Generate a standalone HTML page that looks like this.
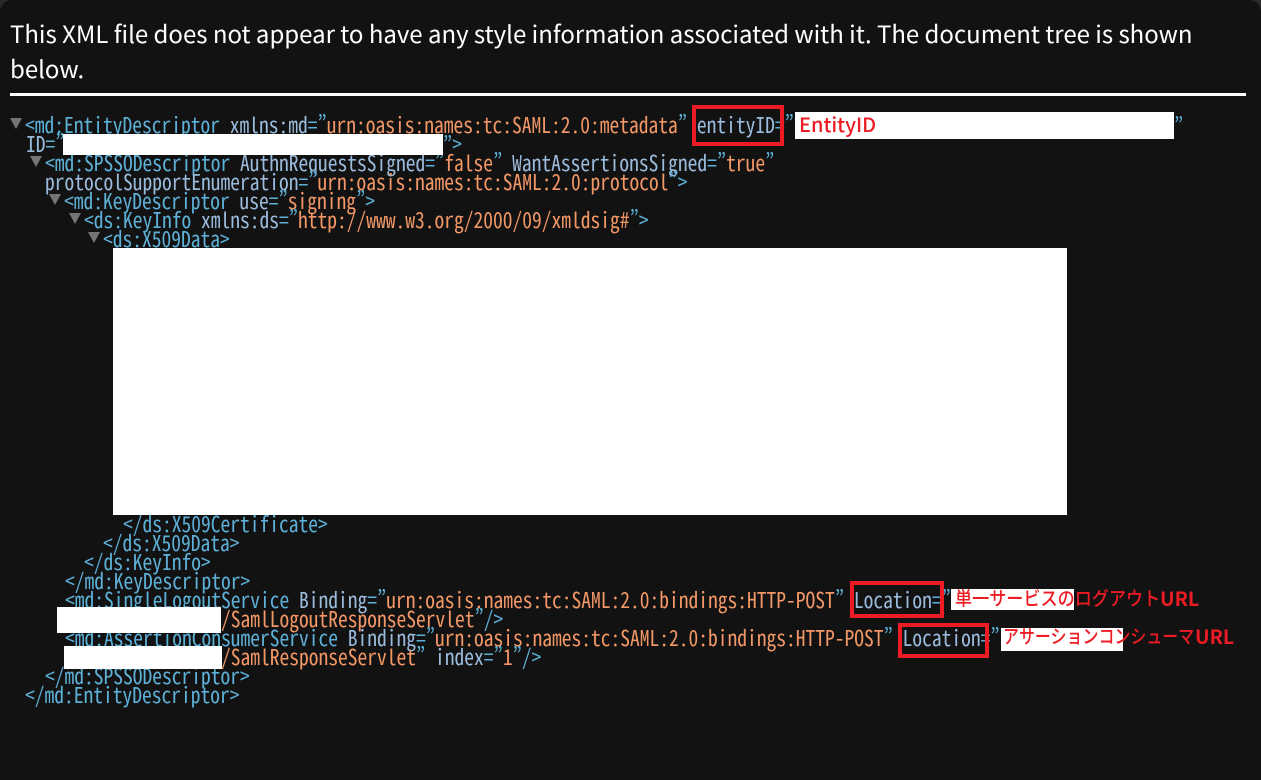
<!DOCTYPE html>
<html lang="ja"><head><meta charset="utf-8"><title>XML</title>
<style>
html,body{margin:0;padding:0;background:#2a2a2a;}
#p{position:relative;width:1261px;height:780px;overflow:hidden;background:#121212;border-radius:12px 12px 0 0;}
.h{position:absolute;left:10px;width:1200px;font:24px/35px "Noto Sans CJK JP","Liberation Sans",sans-serif;color:#fff;white-space:pre;letter-spacing:-.01px;}
.hr{position:absolute;left:10px;top:93px;width:1236px;height:3px;background:#fff;}
.l{position:absolute;white-space:pre;font-family:"Noto Sans Mono CJK JP","Noto Sans CJK JP","Liberation Mono",monospace;font-size:19.5px;line-height:19px;height:19px;color:#5db0d7;letter-spacing:0;transform:translateY(-1px) scaleY(1.12);transform-origin:50% 50%;}
.a{color:#9bbbdc}.v{color:#f29766}
.t{position:absolute;width:0;height:0;border-left:6px solid transparent;border-right:6px solid transparent;border-top:11px solid #757575;}
.w{position:absolute;background:#fff;}
.r{position:absolute;border:4px solid #ed1c24;box-sizing:border-box;}
.x{position:absolute;white-space:pre;color:#ed1c24;font-family:"Noto Sans CJK JP","Liberation Sans",sans-serif;font-weight:500;font-size:20px;line-height:24px;}
.k{transform-origin:0 50%;font-size:19px;}
.u{position:absolute;white-space:pre;color:#ed1c24;font-family:"Noto Sans CJK JP","Liberation Sans",sans-serif;font-weight:700;font-size:19.5px;line-height:24px;}
</style></head><body><div id="p">
<div class="h" style="top:15px">This XML file does not appear to have any style information associated with it. The document tree is shown</div>
<div class="h" style="top:50px">below.</div>
<div class="hr"></div>

<div class="t" style="left:10px;top:118px"></div>
<div class="t" style="left:30px;top:156px"></div>
<div class="t" style="left:49px;top:194px"></div>
<div class="t" style="left:69px;top:213px"></div>
<div class="t" style="left:88px;top:232px"></div>

<div class="l" style="left:25px;top:115px">&lt;md:EntityDescriptor <span class="a">xmlns:md</span>=”<span class="v">urn:oasis:names:tc:SAML:2.0:metadata</span>” <span class="a">entityID</span>=”</div>
<div class="l" style="left:1174px;top:115px">”</div>
<div class="l" style="left:26px;top:134px"><span class="a">ID</span>=”</div>
<div class="l" style="left:443px;top:134px">”&gt;</div>
<div class="l" style="left:45px;top:153px">&lt;md:SPSSODescriptor <span class="a">AuthnRequestsSigned</span>=”<span class="v">false</span>” <span class="a">WantAssertionsSigned</span>=”<span class="v">true</span>”</div>
<div class="l" style="left:45px;top:172px"><span class="a">protocolSupportEnumeration</span>=”<span class="v">urn:oasis:names:tc:SAML:2.0:protocol</span>”&gt;</div>
<div class="l" style="left:64px;top:191px">&lt;md:KeyDescriptor <span class="a">use</span>=”<span class="v">signing</span>”&gt;</div>
<div class="l" style="left:84px;top:210px">&lt;ds:KeyInfo <span class="a">xmlns:ds</span>=”<span class="v">http://www.w3.org/2000/09/xmldsig#</span>”&gt;</div>
<div class="l" style="left:103px;top:229px">&lt;ds:X509Data&gt;</div>
<div class="l" style="left:123px;top:514px">&lt;/ds:X509Certificate&gt;</div>
<div class="l" style="left:103px;top:533px">&lt;/ds:X509Data&gt;</div>
<div class="l" style="left:84px;top:552px">&lt;/ds:KeyInfo&gt;</div>
<div class="l" style="left:65px;top:571px">&lt;/md:KeyDescriptor&gt;</div>
<div class="l" style="left:65px;top:590px">&lt;md:SingleLogoutService <span class="a">Binding</span>=”<span class="v">urn:oasis:names:tc:SAML:2.0:bindings:HTTP-POST</span>” <span class="a">Location</span>=”</div>
<div class="l" style="left:221px;top:609px"><span class="v">/SamlLogoutResponseServlet</span>”/&gt;</div>
<div class="l" style="left:65px;top:628px">&lt;md:AssertionConsumerService <span class="a">Binding</span>=”<span class="v">urn:oasis:names:tc:SAML:2.0:bindings:HTTP-POST</span>” <span class="a">Location</span>=”</div>
<div class="l" style="left:221px;top:647px"><span class="v">/SamlResponseServlet</span>” <span class="a">index</span>=”<span class="v">1</span>”/&gt;</div>
<div class="l" style="left:45px;top:666px">&lt;/md:SPSSODescriptor&gt;</div>
<div class="l" style="left:25px;top:685px">&lt;/md:EntityDescriptor&gt;</div>

<div class="w" style="left:795px;top:112px;width:379px;height:27px"></div>
<div class="w" style="left:63px;top:134px;width:380px;height:21px"></div>
<div class="w" style="left:113px;top:248px;width:954px;height:267px"></div>
<div class="w" style="left:57px;top:607px;width:164px;height:26px"></div>
<div class="w" style="left:64px;top:646px;width:158px;height:23px"></div>
<div class="w" style="left:951px;top:589px;width:123px;height:21px"></div>
<div class="w" style="left:1001px;top:628px;width:122px;height:23px"></div>

<div class="r" style="left:692px;top:105px;width:92px;height:41px"></div>
<div class="r" style="left:850px;top:581px;width:94px;height:37px"></div>
<div class="r" style="left:898px;top:623px;width:91px;height:35px"></div>

<div class="x" style="left:799px;top:112px">EntityID</div>
<div class="x k" style="left:955px;top:586px;transform:scaleX(.9)">単一サービスのログアウト</div>
<div class="u" style="left:1160px;top:586px">URL</div>
<div class="x k" style="left:1003px;top:624px;transform:scaleX(.84)">アサーションコンシューマ</div>
<div class="u" style="left:1195px;top:624px">URL</div>
</div></body></html>
